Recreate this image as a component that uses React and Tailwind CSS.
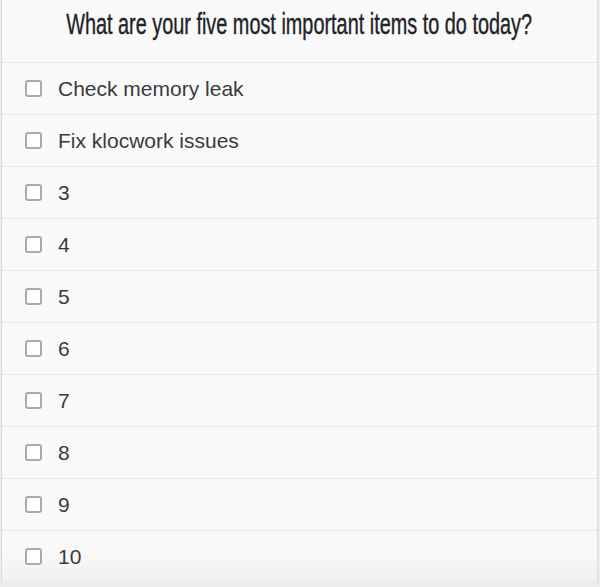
import React, { useState } from 'react';

const items = ['Check memory leak', 'Fix klocwork issues', '3', '4', '5', '6', '7', '8', '9', '10'];

export default function App() {
  const [checked, setChecked] = useState({});

  return (
    <div className="w-[600px] h-[587px] bg-[#ececed] overflow-hidden">
      <div className="ml-[1px] w-[597px] bg-[#f9f9fa] border-l border-r border-[#d9dbdf]">
        {/* Title */}
        <div className="h-[63px] flex items-start justify-center pt-[5px] border-b border-[#e6e7e9] overflow-hidden">
          <h1
            className="text-[29px] leading-[38px] text-[#1e2428] whitespace-nowrap scale-x-[0.685] origin-center [-webkit-text-stroke:0.4px_#1e2428]"
            style={{ fontFamily: '"Liberation Sans", Arial, sans-serif' }}
          >
            What are your five most important items to do today?
          </h1>
        </div>

        {/* Items */}
        {items.map((item, i) => (
          <label
            key={i}
            className={`h-[52px] flex items-center border-b border-[#e6e7e9] cursor-pointer ${
              i === items.length - 1 ? 'bg-gradient-to-b from-[#f9f9fa] via-[#f8f8f9] to-[#efeff0] border-[#dcdde0]' : ''
            }`}
            onClick={() => setChecked({ ...checked, [i]: !checked[i] })}
          >
            <span className="ml-[23px] w-[17px] h-[17px] rounded-[3px] border-2 border-[#a3aeac] bg-white flex-shrink-0" />
            <span
              className="ml-[16px] text-[21px] text-[#383c3f]"
              style={{ fontFamily: '"Liberation Sans", Arial, sans-serif' }}
            >
              {item}
            </span>
          </label>
        ))}
      </div>
    </div>
  );
}
